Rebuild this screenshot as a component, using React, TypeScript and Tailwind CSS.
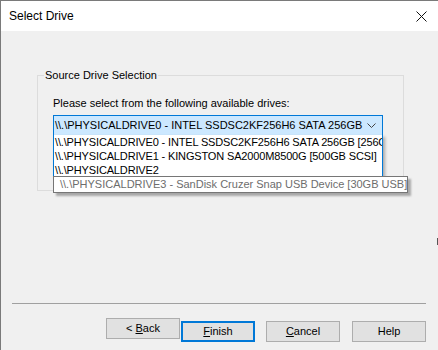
import React from 'react'

const drives = [
  '\\\\.\\PHYSICALDRIVE0 - INTEL SSDSC2KF256H6 SATA 256GB [256GB SATA]',
  '\\\\.\\PHYSICALDRIVE1 - KINGSTON SA2000M8500G [500GB SCSI]',
  '\\\\.\\PHYSICALDRIVE2',
]

function Btn({ children, focused }: { children: React.ReactNode; focused?: boolean }) {
  return (
    <button
      className={
        focused
          ? 'w-[74px] h-[21px] bg-[#e1e1e1] border-2 border-[#0078d7] text-[11px] leading-none text-black'
          : 'w-[74px] h-[21px] bg-[#e1e1e1] border border-[#adadad] text-[11px] leading-none text-black'
      }
    >
      {children}
    </button>
  )
}

export default function App() {
  return (
    <div className="relative w-[438px] h-[350px] bg-[#f0f0f0] border-l border-t border-[#7a7a7a] flex flex-col overflow-hidden font-['Liberation_Sans',Arial,sans-serif] text-black">
      {/* title bar */}
      <div className="h-[30px] bg-white flex items-center justify-between pl-[8px] pr-[11px] shrink-0">
        <span className="text-[12px]">Select Drive</span>
        <svg width="11" height="11" viewBox="0 0 11 11">
          <path d="M0.5 0.5 L10.5 10.5 M10.5 0.5 L0.5 10.5" stroke="#111" strokeWidth="1" />
        </svg>
      </div>

      {/* group box */}
      <div className="relative ml-[36px] mt-[44px] w-[367px] h-[116px] border border-[#dcdcdc] shrink-0">
        <span className="absolute -top-[8px] left-[6px] px-[1px] bg-[#f0f0f0] text-[11px] leading-[15px]">
          Source Drive Selection
        </span>
        <div className="pt-[20px] pl-[15px]">
          <div className="text-[11px] leading-[15px]">Please select from the following available drives:</div>
          <div className="relative mt-[4px] w-[330px]">
            <div className="h-[21px] bg-[#cce8ff] border border-[#0078d7] flex items-center justify-between pl-[1px] pr-[6px] text-[11px] whitespace-nowrap">
              <span>{'\\\\.\\PHYSICALDRIVE0 - INTEL SSDSC2KF256H6 SATA 256GB'}</span>
              <svg width="9" height="5" viewBox="0 0 9 5">
                <path d="M0.5 0.5 L4.5 4.5 L8.5 0.5" stroke="#444" strokeWidth="1" fill="none" />
              </svg>
            </div>

            {/* open drop-down list */}
            <div className="absolute left-0 top-[20px] w-[330px] h-[42px] bg-white border-x border-b border-[#0078d7] shadow-[2px_2px_3px_rgba(0,0,0,0.3)] overflow-hidden z-10">
              {drives.map(d => (
                <div key={d} className="pl-[1px] text-[11px] leading-[14px] tracking-[-0.15px] whitespace-nowrap">
                  {d}
                </div>
              ))}
            </div>

            {/* tooltip */}
            <div className="absolute left-0 top-[61px] w-[355px] h-[17px] bg-white border border-[#767676] shadow-[3px_3px_2px_rgba(0,0,0,0.3)] pl-[6px] flex items-center text-[11px] text-[#6d6d6d] whitespace-nowrap z-20">
              {'\\\\.\\PHYSICALDRIVE3 - SanDisk Cruzer Snap USB Device [30GB USB]'}
            </div>
          </div>
        </div>
      </div>

      {/* separator */}
      <div className="ml-[11px] mt-[112px] w-[414px] h-px bg-[#a0a0a0] shrink-0" />

      {/* buttons */}
      <div className="flex mt-[14px] ml-[105px]">
        <Btn>
          &lt; <u>B</u>ack
        </Btn>
        <div className="ml-[1px]">
          <Btn focused>
            <u>F</u>inish
          </Btn>
        </div>
        <div className="ml-[11px]">
          <Btn>
            <u>C</u>ancel
          </Btn>
        </div>
        <div className="ml-[12px]">
          <Btn>Help</Btn>
        </div>
      </div>

      <div className="absolute right-0 top-[237px] w-px h-[7px] bg-[#555]" />
    </div>
  )
}
